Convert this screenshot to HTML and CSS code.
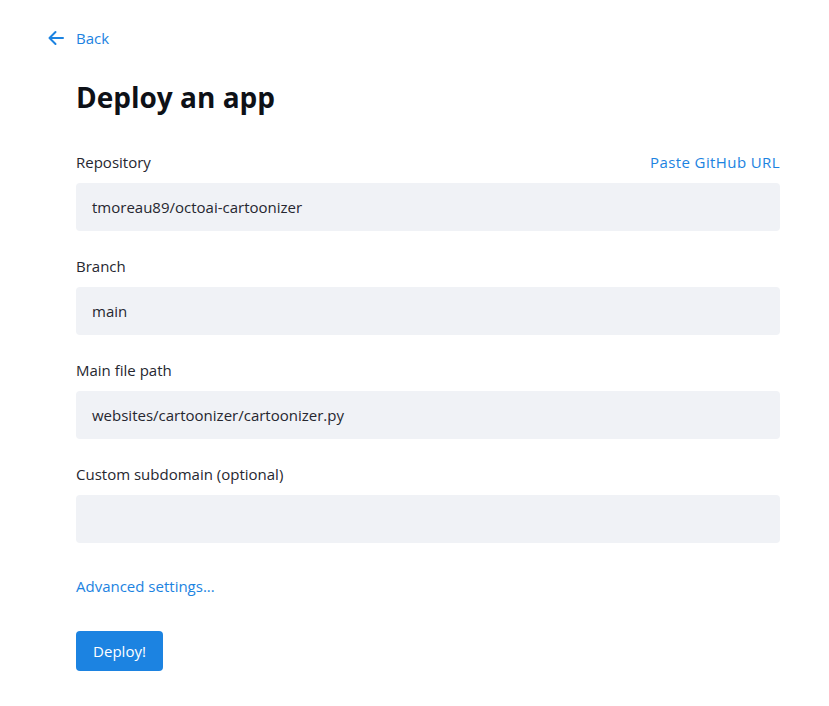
FILE: index.html
```html
<!DOCTYPE html>
<html>
<head>
<meta charset="utf-8">
<link rel="stylesheet" href="styles.css">
</head>
<body>
<div class="page">
  <a class="back" href="#">
    <svg class="back-icon" width="16" height="16" viewBox="0 0 16 16" fill="none" stroke="#1c83e1" stroke-width="2" stroke-linecap="round" stroke-linejoin="round"><path d="M15 8H1.5M7.5 2L1.5 8l6 6"/></svg>
    <span>Back</span>
  </a>
  <main class="form">
    <h1 class="title">Deploy an app</h1>
    <div class="field">
      <div class="label-row"><span class="label">Repository</span><a class="link" href="#">Paste GitHub URL</a></div>
      <div class="input">tmoreau89/octoai-cartoonizer</div>
    </div>
    <div class="field">
      <div class="label-row"><span class="label">Branch</span></div>
      <div class="input">main</div>
    </div>
    <div class="field">
      <div class="label-row"><span class="label">Main file path</span></div>
      <div class="input">websites/cartoonizer/cartoonizer.py</div>
    </div>
    <div class="field">
      <div class="label-row"><span class="label">Custom subdomain (optional)</span></div>
      <div class="input"></div>
    </div>
    <a class="link advanced" href="#">Advanced settings...</a>
    <button class="deploy">Deploy!</button>
  </main>
</div>
</body>
</html>
```
FILE: styles.css
```css
* { box-sizing: border-box; }
body {
  margin: 0;
  background: #ffffff;
  font-family: "Open Sans", "Lato", sans-serif;
  color: #31333f;
}
.page {
  padding: 28px 0 0 48px;
}
.back {
  display: flex;
  align-items: center;
  gap: 12px;
  height: 20px;
  color: #1c83e1;
  text-decoration: none;
  font-size: 15px;
}
.form {
  margin-left: 28px;
  width: 704px;
  display: flex;
  flex-direction: column;
}
.title {
  margin: 31px 0 0;
  font-size: 28px;
  line-height: 36px;
  font-weight: 700;
  color: #0e1117;
}
.field { margin-top: 37px; }
.field + .field { margin-top: 25px; }
.label-row {
  display: flex;
  justify-content: space-between;
  height: 20px;
  line-height: 20px;
  font-size: 15px;
  color: #262730;
}
.link {
  color: #1c83e1;
  text-decoration: none;
  font-size: 15px;
  line-height: 20px;
}
.label-row .link { letter-spacing: 0.4px; }
.input {
  margin-top: 11px;
  height: 48px;
  background: #f0f2f6;
  border-radius: 4px;
  padding: 0 16px;
  display: flex;
  align-items: center;
  font-size: 15px;
  color: #262730;
}
.advanced {
  margin-top: 33px;
  align-self: flex-start;
}
.deploy {
  margin-top: 35px;
  align-self: flex-start;
  height: 40px;
  width: 87px;
  border: none;
  border-radius: 4px;
  background: #1c83e1;
  color: #ffffff;
  font-family: inherit;
  font-size: 15px;
  padding: 0;
}
```
